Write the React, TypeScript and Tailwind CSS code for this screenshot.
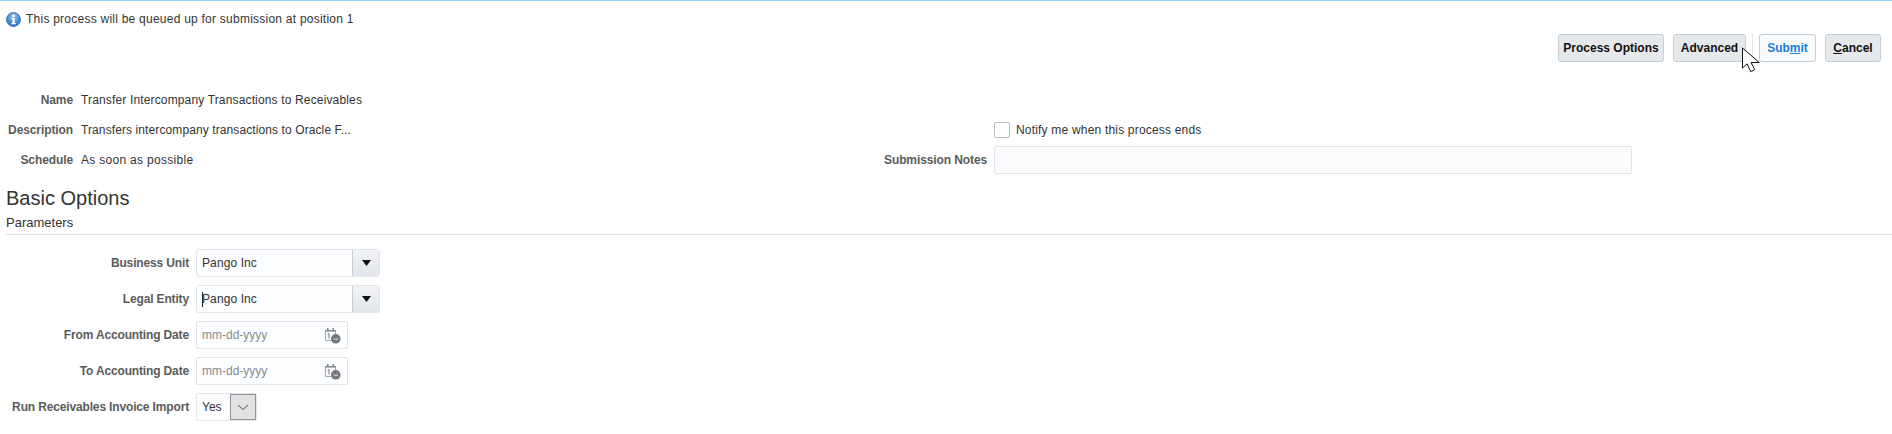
import { ReactNode } from "react";

const font = { fontFamily: '"Liberation Sans", Arial, sans-serif' };

const InfoIcon = () => (
  <svg width="15" height="15" viewBox="0 0 15 15" className="shrink-0">
    <defs>
      <radialGradient id="infoFill" cx="50%" cy="30%" r="70%">
        <stop offset="0%" stopColor="#8fc2f0" />
        <stop offset="100%" stopColor="#2273c9" />
      </radialGradient>
    </defs>
    <circle cx="7.5" cy="7.5" r="6.9" fill="url(#infoFill)" stroke="#2f6fb3" strokeWidth="1" />
    <rect x="6.2" y="2.6" width="2.6" height="2.4" fill="#fff" />
    <path d="M5.4 6h3.4v5h1v1.2H5.4V11h1V7.2h-1z" fill="#fff" />
  </svg>
);

const CalendarIcon = () => (
  <svg width="17" height="17" viewBox="0 0 17 17">
    <path d="M1.5 3.5h10v10h-10z" fill="#fafafa" stroke="#a5a9ad" strokeWidth="1" />
    <rect x="1" y="3" width="11" height="1.6" fill="#8a8f94" />
    <rect x="3" y="1" width="1.5" height="3" fill="#7d8288" />
    <rect x="8.5" y="1" width="1.5" height="3" fill="#7d8288" />
    <path d="M3.6 7.4l1.4-.9v5" fill="none" stroke="#777c82" strokeWidth="1" />
    <circle cx="11.8" cy="11.8" r="4.8" fill="#74797f" />
    <path d="M9.6 11.6l2.2 1 2.2-.8" fill="none" stroke="#e3e5e7" strokeWidth="1" />
  </svg>
);

const Cursor = () => (
  <svg width="20" height="29" viewBox="0 0 20 29" className="absolute left-[1741px] top-[47px]">
    <path d="M1.5 1v20l4.6-4.2 3.6 7.8 4-1.9-3.6-7.2h8.2z" fill="#fff" stroke="#111" strokeWidth="1" strokeLinejoin="miter" />
  </svg>
);

const Btn = ({ children, cls }: { children: ReactNode; cls: string }) => (
  <button className={`h-[28px] rounded-[3px] border border-[#c4ced7] text-[12px] font-bold flex items-center justify-center ${cls}`}>
    {children}
  </button>
);

const InfoRow = ({ label, value, track }: { label: string; value: string; track: string }) => (
  <div className="flex h-[30px] items-center">
    <div className="w-[73px] text-right text-[12px] font-bold tracking-[-0.1px] text-[#5b5b5b]">{label}</div>
    <div className={`ml-[8px] text-[12px] text-[#333] ${track}`}>{value}</div>
  </div>
);

const ParamRow = ({ label, children }: { label: string; children: ReactNode }) => (
  <div className="flex h-[36px] items-start">
    <div className="flex h-[28px] w-[189px] items-center justify-end text-[12px] font-bold tracking-[-0.15px] text-[#5b5b5b]">{label}</div>
    <div className="ml-[7px]">{children}</div>
  </div>
);

const Combo = ({ caret }: { caret?: boolean }) => (
  <div className="flex h-[28px] w-[184px] rounded-[3px] border border-[#dfe4ea] bg-[#fcfdfe]">
    <div className="relative flex flex-1 items-center pl-[5px] text-[12px] tracking-[0.1px] text-[#333]">
      {caret && <span className="absolute left-[5px] top-[6px] h-[15px] w-px bg-[#222]" />}
      Pango Inc
    </div>
    <div className="flex w-[27px] items-center justify-center rounded-r-[3px] border-l border-[#c4ced7] bg-gradient-to-b from-[#f1f3f5] to-[#e2e6ea]">
      <svg width="9" height="6" viewBox="0 0 9 6">
        <path d="M0 0h9L4.5 6z" fill="#111" />
      </svg>
    </div>
  </div>
);

const DateInput = () => (
  <div className="flex h-[28px] w-[152px] items-center justify-between rounded-[2px] border border-[#dfe4ea] bg-[#fcfdfe] pl-[5px] pr-[6px] text-[12px] text-[#8a8a8a]">
    <span>mm-dd-yyyy</span>
    <CalendarIcon />
  </div>
);

export default function App() {
  return (
    <div className="relative h-[434px] w-[1892px] overflow-hidden bg-white" style={font}>
      <div className="h-px bg-[#8fd4ff]" />
      <div className="flex h-[33px] items-center gap-[5px] pl-[6px] pt-[3px] text-[12px] text-[#333]">
        <InfoIcon />
        <span className="tracking-[0.24px]">This process will be queued up for submission at position 1</span>
      </div>

      <div className="flex justify-end pr-[11px]">
        <Btn cls="w-[106px] bg-[#e6e9ec] text-[#111]">Process Options</Btn>
        <Btn cls="ml-[9px] w-[73px] bg-[#e6e9ec] text-[#111]">Advanced</Btn>
        <div className="mx-[6px] h-[28px] w-px bg-[#e3e6e9]" />
        <Btn cls="w-[57px] bg-[#f8fafc] text-[#1a7fd6]">
          <span>
            Sub<span className="underline">m</span>it
          </span>
        </Btn>
        <Btn cls="ml-[9px] w-[56px] bg-[#e6e9ec] text-[#111]">
          <span>
            <span className="underline">C</span>ancel
          </span>
        </Btn>
      </div>
      <Cursor />

      <div className="mt-[23px] flex">
        <div className="w-[994px]">
          <InfoRow label="Name" value="Transfer Intercompany Transactions to Receivables" track="tracking-[0.15px]" />
          <InfoRow label="Description" value="Transfers intercompany transactions to Oracle F..." track="tracking-[0.1px]" />
          <InfoRow label="Schedule" value="As soon as possible" track="tracking-[0.3px]" />
        </div>
      </div>
      <div className="absolute left-[884px] top-[122px]">
        <div className="ml-[110px] flex h-[16px] items-center gap-[6px] text-[12px] text-[#333]">
          <span className="h-[16px] w-[16px] rounded-[2px] border border-[#b5bdc5] bg-white" />
          <span className="tracking-[0.19px]">Notify me when this process ends</span>
        </div>
        <div className="mt-[8px] flex items-center">
          <div className="w-[102px] whitespace-nowrap text-right text-[12px] font-bold tracking-[-0.1px] text-[#5b5b5b]">Submission Notes</div>
          <div className="ml-[8px] h-[28px] w-[638px] rounded-[2px] border border-[#dfe4ea] bg-[#fbfcfe]" />
        </div>
      </div>

      <div className="ml-[6px] mt-[11px] text-[20px] leading-[24px] text-[#333]">Basic Options</div>
      <div className="ml-[6px] mt-[5px] text-[13px] leading-[16px] text-[#333]">Parameters</div>
      <div className="ml-[6px] mt-[3px] h-px bg-[#d6dfe6]" />

      <div className="mt-[14px]">
        <ParamRow label="Business Unit">
          <Combo />
        </ParamRow>
        <ParamRow label="Legal Entity">
          <Combo caret />
        </ParamRow>
        <ParamRow label="From Accounting Date">
          <DateInput />
        </ParamRow>
        <ParamRow label="To Accounting Date">
          <DateInput />
        </ParamRow>
        <ParamRow label="Run Receivables Invoice Import">
          <div className="flex h-[28px] w-[61px] rounded-[2px] border border-[#e3e7ec] bg-[#fcfdfe] text-[12px] text-[#333]">
            <div className="flex w-[33px] items-center pl-[5px]">Yes</div>
            <div className="flex w-[26px] items-center justify-center border border-[#8e9499] bg-[#e2e2e2]">
              <svg width="12" height="7" viewBox="0 0 12 7">
                <path d="M1 1l5 4.5L11 1" fill="none" stroke="#555" strokeWidth="1" />
              </svg>
            </div>
          </div>
        </ParamRow>
      </div>
    </div>
  );
}
